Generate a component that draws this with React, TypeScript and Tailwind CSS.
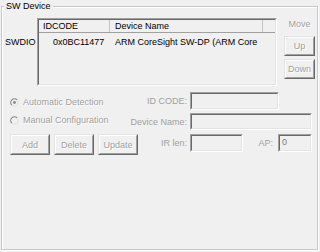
import React from "react";

function Radio({ checked }: { checked?: boolean }) {
  return (
    <svg width="9" height="9" viewBox="0 0 12 12" className="shrink-0">
      <circle cx="6" cy="6" r="5" fill="#f0f0f0" />
      <path d="M2.46 9.54 A5 5 0 0 1 9.54 2.46" fill="none" stroke="#8a8a8a" strokeWidth="1.6" />
      <path d="M9.54 2.46 A5 5 0 0 1 2.46 9.54" fill="none" stroke="#e2e2e2" strokeWidth="1.6" />
      {checked && <circle cx="6" cy="6" r="1.9" fill="#8a8a8a" />}
    </svg>
  );
}

function Btn({ label, w, h }: { label: string; w: string; h: string }) {
  return (
    <div className={`${w} ${h} border border-t-[#e3e3e3] border-l-[#e3e3e3] border-r-[#696969] border-b-[#696969] bg-[#f0f0f0]`}>
      <div className="w-full h-full border border-t-white border-l-white border-r-[#a0a0a0] border-b-[#a0a0a0] flex items-center justify-center text-[#a0a0a0] [text-shadow:1px_1px_0_#ffffff]">
        {label}
      </div>
    </div>
  );
}

function Field({ w, h, value }: { w: string; h: string; value?: string }) {
  return (
    <div className={`${w} ${h} shrink-0 border border-t-[#a0a0a0] border-l-[#a0a0a0] border-r-white border-b-white`}>
      <div className="w-full h-full border border-t-[#696969] border-l-[#696969] border-r-[#e3e3e3] border-b-[#e3e3e3] bg-[#f0f0f0] pl-[2px] text-[#7a7a7a] leading-[12px]">
        {value}
      </div>
    </div>
  );
}

function Label({ text, w }: { text: string; w: string }) {
  return (
    <div className={`${w} h-[18px] shrink-0 flex items-center justify-end whitespace-nowrap text-[#a0a0a0]`}>
      <span className="shrink-0">{text}</span>
    </div>
  );
}

export default function App() {
  return (
    <div className="w-[320px] h-[252px] bg-[#f0f0f0] pt-[6px] pl-[1px] overflow-hidden font-['Liberation_Sans',Arial,sans-serif] text-[9px] leading-[12px] text-black">
      <div className="relative w-[317px] h-[244px] border border-[#c8c8c8] shadow-[inset_1px_1px_0_#ffffff,1px_1px_0_#ffffff] pt-[11px]">
        <div className="absolute left-[2px] top-[-7px] px-[2px] bg-[#f0f0f0] leading-[12px]">SW Device</div>

        {/* Row 1 */}
        <div className="flex">
          <div className="w-[35px] pl-[3px] pt-[18px] shrink-0">SWDIO</div>
          <div className="w-[240px] h-[68px] shrink-0 border border-t-[#a0a0a0] border-l-[#a0a0a0] border-r-white border-b-white">
            <div className="w-full h-full border border-t-[#696969] border-l-[#696969] border-r-[#e3e3e3] border-b-[#e3e3e3] bg-[#f0f0f0] overflow-hidden">
              <div className="flex h-[13px] border-b border-[#a0a0a0]">
                <div className="w-[71px] shrink-0 border-r border-[#c4c4c4] pl-[4px]">IDCODE</div>
                <div className="w-[153px] shrink-0 border-r border-[#c4c4c4] pl-[5px] whitespace-nowrap">Device Name</div>
                <div className="flex-1" />
              </div>
              <div className="flex h-[18px] items-center whitespace-nowrap">
                <div className="w-[71px] shrink-0 pl-[14px]">0x0BC11477</div>
                <div className="w-[153px] shrink-0 pl-[5px] overflow-hidden">ARM CoreSight SW-DP (ARM Core</div>
              </div>
            </div>
          </div>
          <div className="ml-[7px] w-[31px] shrink-0 flex flex-col">
            <div className="h-[12px] text-center text-[#a0a0a0] [text-shadow:1px_1px_0_#ffffff]">Move</div>
            <div className="mt-[6px]">
              <Btn label="Up" w="w-[31px]" h="h-[20px]" />
            </div>
            <div className="mt-[3px]">
              <Btn label="Down" w="w-[31px]" h="h-[20px]" />
            </div>
          </div>
        </div>

        {/* Row A */}
        <div className="flex mt-[6px] h-[18px] items-start">
          <div className="w-[138px] shrink-0 pl-[8px] mt-[4px] h-[12px] flex items-center">
            <Radio checked />
            <span className="ml-[4px] text-[#a0a0a0] [text-shadow:1px_1px_0_#ffffff] whitespace-nowrap">Automatic Detection</span>
          </div>
          <Label text="ID CODE:" w="w-[47px]" />
          <div className="ml-[3px]">
            <Field w="w-[89px]" h="h-[18px]" />
          </div>
        </div>

        {/* Row B */}
        <div className="flex mt-[3px] h-[17px] items-start">
          <div className="w-[138px] shrink-0 pl-[8px] mt-[1px] h-[12px] flex items-center">
            <Radio />
            <span className="ml-[4px] text-[#a0a0a0] [text-shadow:1px_1px_0_#ffffff] whitespace-nowrap">Manual Configuration</span>
          </div>
          <div className="w-[47px] h-[17px] shrink-0 flex items-center justify-end whitespace-nowrap text-[#a0a0a0]">
            <span className="shrink-0">Device Name:</span>
          </div>
          <div className="ml-[3px]">
            <Field w="w-[122px]" h="h-[17px]" />
          </div>
        </div>

        {/* Row C */}
        <div className="flex mt-[4px] h-[21px] items-start">
          <div className="w-[138px] shrink-0 pl-[8px] flex gap-[4px]">
            <Btn label="Add" w="w-[40px]" h="h-[21px]" />
            <Btn label="Delete" w="w-[40px]" h="h-[21px]" />
            <Btn label="Update" w="w-[40px]" h="h-[21px]" />
          </div>
          <Label text="IR len:" w="w-[47px]" />
          <div className="ml-[3px]">
            <Field w="w-[53px]" h="h-[18px]" />
          </div>
          <Label text="AP:" w="w-[30px]" />
          <div className="ml-[5px]">
            <Field w="w-[34px]" h="h-[18px]" value="0" />
          </div>
        </div>
      </div>
    </div>
  );
}
